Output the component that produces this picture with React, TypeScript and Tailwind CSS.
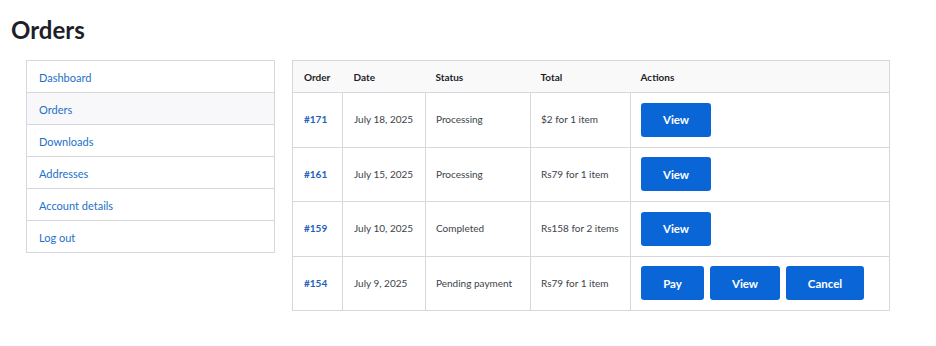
const navItems = ["Dashboard", "Orders", "Downloads", "Addresses", "Account details", "Log out"];

type Order = {
  id: string;
  date: string;
  status: string;
  total: string;
  actions: string[];
};

const orders: Order[] = [
  { id: "#171", date: "July 18, 2025", status: "Processing", total: "$2 for 1 item", actions: ["View"] },
  { id: "#161", date: "July 15, 2025", status: "Processing", total: "Rs79 for 1 item", actions: ["View"] },
  { id: "#159", date: "July 10, 2025", status: "Completed", total: "Rs158 for 2 items", actions: ["View"] },
  { id: "#154", date: "July 9, 2025", status: "Pending payment", total: "Rs79 for 1 item", actions: ["Pay", "View", "Cancel"] },
];

function ActionButton({ label }: { label: string }) {
  const width = label === "Pay" ? "w-[63px]" : label === "Cancel" ? "w-[78px]" : "w-[70px]";
  return (
    <button
      className={`${width} h-[34px] rounded-[3px] bg-[#0a66d6] text-white text-[11.5px] font-bold`}
    >
      {label}
    </button>
  );
}

export default function App() {
  return (
    <div
      className="w-[936px] h-[346px] bg-white text-[#3c434a]"
      style={{ fontFamily: 'Lato, "Noto Sans", sans-serif' }}
    >
      <h1 className="pl-[11px] pt-[13px] h-[60px] text-[24px] font-bold text-[#1e1e2a] leading-[34px]">
        Orders
      </h1>

      <div className="flex items-start pl-[26px] gap-[17px]">
        {/* account nav */}
        <nav className="w-[249px] border-x border-b border-[#d6d8de]">
          {navItems.map((item) => (
            <div
              key={item}
              className={`h-[32px] flex items-center px-[12px] pt-[3px] text-[11px] text-[#2271c9] border-t border-[#d6d8de] ${
                item === "Orders" ? "bg-[#f8f8fa]" : ""
              }`}
            >
              {item}
            </div>
          ))}
        </nav>

        {/* orders table */}
        <table className="w-[598px] border-collapse border border-[#d6d8de] text-[10px]">
          <thead>
            <tr className="h-[32px] bg-[#f9f9f9] text-left text-[#1e1e2a] border-b border-[#d6d8de]">
              <th className="w-[50px] pl-[11px] pt-[2px] font-bold">Order</th>
              <th className="w-[83px] pl-[11px] pt-[2px] font-bold">Date</th>
              <th className="w-[105px] pl-[10px] pt-[2px] font-bold">Status</th>
              <th className="w-[100px] pl-[10px] pt-[2px] font-bold">Total</th>
              <th className="pl-[10px] pt-[2px] font-bold">Actions</th>
            </tr>
          </thead>
          <tbody>
            {orders.map((o) => (
              <tr key={o.id} className="h-[54.5px] border-b border-[#d6d8de]">
                <td className="pl-[11px] font-bold text-[#1f5fb8]">{o.id}</td>
                <td className="pl-[11px] border-l border-[#d6d8de]">{o.date}</td>
                <td className="pl-[10px] border-l border-[#d6d8de]">{o.status}</td>
                <td className="pl-[10px] border-l border-[#d6d8de]">{o.total}</td>
                <td className="pl-[10px] border-l border-[#d6d8de]">
                  <div className="flex gap-[6px]">
                    {o.actions.map((a) => (
                      <ActionButton key={a} label={a} />
                    ))}
                  </div>
                </td>
              </tr>
            ))}
          </tbody>
        </table>
      </div>
    </div>
  );
}
